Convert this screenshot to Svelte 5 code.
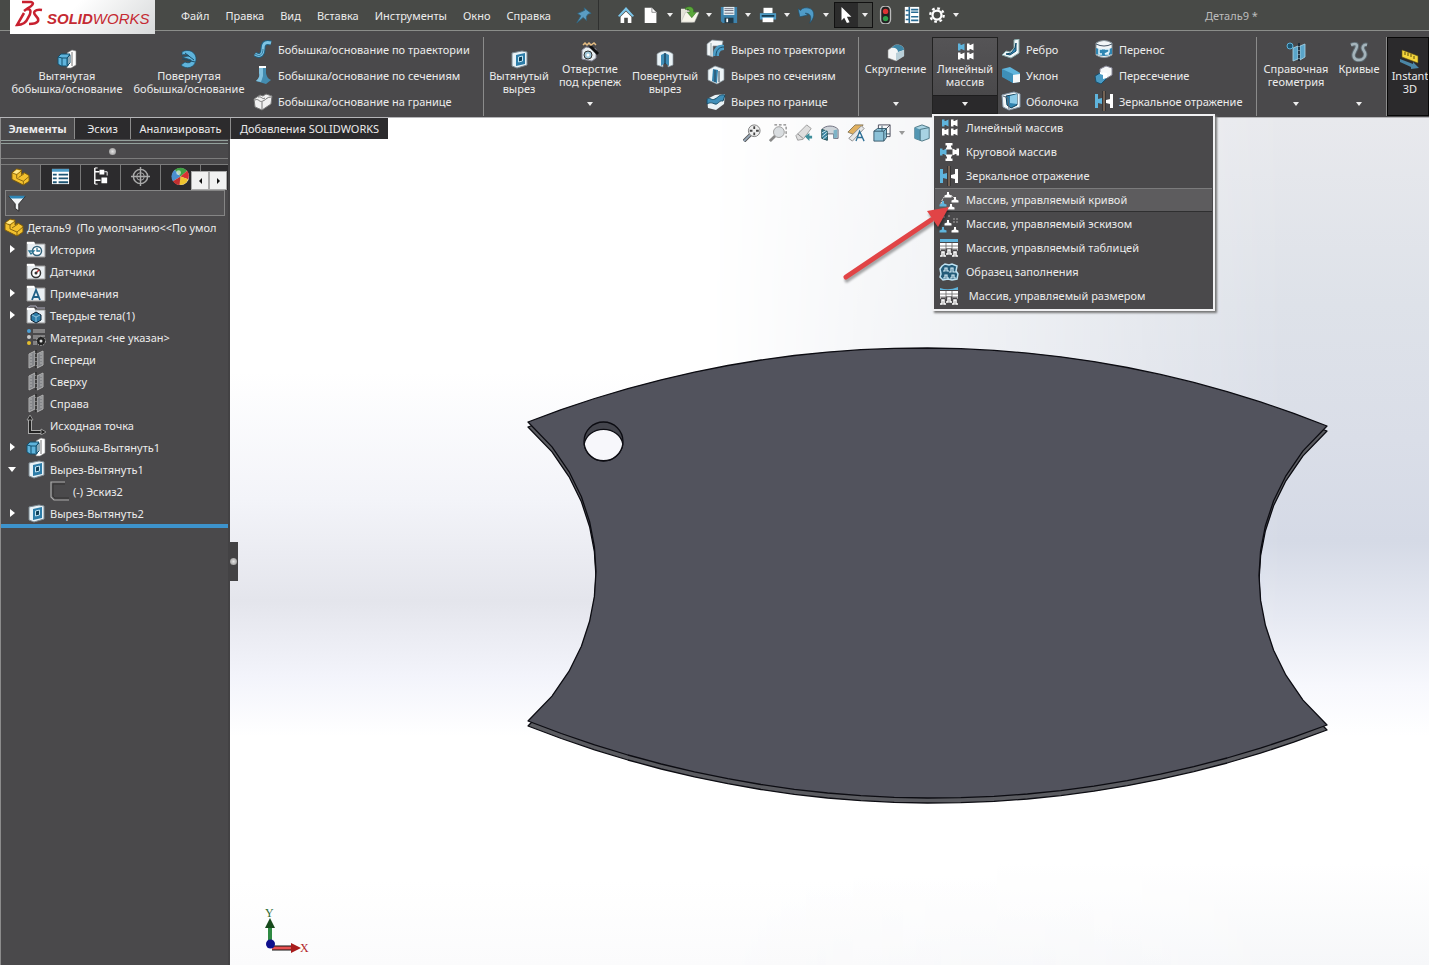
<script>
  const B = '#5fb4dc';
  const L = '#bfe3f3';
  const T = (x, y, c, r = 0) =>
    `<path transform="translate(${x} ${y}) rotate(${r})" d="M-3-3.500h2.500v1.500h1l3-1.500v7l-3-1.500h-1v1.500h-2.500z" fill="${c}"/>`;
  const folder = `<path d="M1 3h7l1 2h10v13H1z" fill="#e9eef2" stroke="#999"/><path d="M1 3h7l1 2H1z" fill="#fff"/>`;
  const cut = `<path d="M3 4l10-2 5 1v13l-10 3-5-2z" fill="#e8f2f7" stroke="#7d8a92"/><path d="M7 6l9-2v11l-9 2z" fill="#2c7ca8"/><path d="M9.500 8l4-1v5l-4 1z" fill="#0f3f58" stroke="${L}"/>`;
  const boss = `<path d="M10 4l5-3 4 1v14l-5 3h-4z" fill="#fff" stroke="#888" stroke-width=".6"/><path d="M15 3v14" stroke="#777"/><path d="M1 8l3-3h9l-2 3v9H4l-3-2z" fill="${B}" stroke="#12506e"/><path d="M1 8l4 1h5l3-3v8l-3 3M5 9v8M10 9v7" fill="none" stroke="#12506e"/>`;
  const tableIcon = (top) =>
    `<path d="${top}v3H1z" fill="${B}"/><path d="M1 5h18v8H1z" fill="#fff"/><path d="M7 5v8M13 5v8M1 8h18M1 11h18" stroke="#666" stroke-width=".8"/><path d="M2 19v-7h4v7M7 17v-6h6v6M14 19v-7h4v7" fill="#4a494b" stroke="#4a494b"/><path d="M1 18h2v-4h2v4h2M7 16h2v-4h2v4h2M13 18h2v-4h2v4h2" fill="none" stroke="#fff" stroke-width="1.500"/>`;
  const plane = `<path d="M3 5l6-3v14l-6 3zM11 5l6-3v14l-6 3z" fill="#84868a" stroke="#b2b2b2"/><path d="M10 1v18" stroke="#2b2b2b" stroke-width="1.500" stroke-dasharray="3 1"/><path d="M5 5v12M15 4v12" stroke="#b2b2b2" stroke-dasharray="2 1"/>`;
  const part = `<path d="M1 6l5-4 5 1v5l3-2 5 3v6l-6 4-12-6z" fill="#f3c12e" stroke="#7d5c0c"/><path d="M1 6l5 2v4l7 3 6-5M6 8l5-4M13 15v4M8 11l6-4" fill="none" stroke="#7d5c0c" stroke-width=".9"/><path d="M2 6l4-3 4 1-4 3z" fill="#ffe88c"/>`;
  const person = (x, y, c) => `<path transform="translate(${x} ${y})" d="M-1-3h2v2.500l2.500 1v2h-7v-2l2.500-1z" fill="${c}"/>`;

  const icons = {
    boss,
    cut,
    part,
    plane,
    revolve: `<path d="M3 3c6-4 15 0 14 8-1 8-10 10-15 5l4-3c4 2 7 0 6-2L3 8l7-1c-1-1-4-2-7-1z" fill="${B}" stroke="#184f6c" stroke-width=".7"/><path d="M3 10l13 3M6 4l9 7" stroke="#1b4d67"/>`,
    sweep: `<path d="M2 15c6 4 8-1 8-5s1-8 8-6" fill="none" stroke="#1f6386" stroke-width="5"/><path d="M2 15c6 4 8-1 8-5s1-8 8-6" fill="none" stroke="#7cc3e4" stroke-width="3"/><path d="M2 15c6 4 8-1 8-5" fill="none" stroke="#1f6386" stroke-width=".8"/>`,
    loft: `<path d="M6 2h7v6c1 5 3 6 5 7l-5 4-10-3c3-3 4-5 3-8z" fill="#438cb0"/><path d="M6 2h4v9l-2 6-5-1c3-3 4-5 3-8z" fill="#82c1de"/><path d="M6 1h7v2H6z" fill="#fff"/>`,
    boundary: `<path d="M1 8l6-4 3 1 3-2 6 2-1 8-9 6-7-3z" fill="#f1f1f1" stroke="#777"/><path d="M2 9c4-2 4 3 8 1s4-4 8-4M9 11v7M5 6c4-1 4 3 7 1" fill="none" stroke="#777"/>`,
    hole: `<path d="M2 8l4-3 10 2v9l-4 3-10-2z" fill="#e7edf0" stroke="#889"/><circle cx="8" cy="13" r="4" fill="#9fc6d9" stroke="#333"/><circle cx="8" cy="13" r="1.500" fill="#fff"/><path d="M10 4l8 8" stroke="#111" stroke-width="3"/><path d="M3 3l2-2 2 2 2-2 2 2 3-2 2 2" fill="none" stroke="#e6bd83" stroke-width="1.500"/>`,
    revcut: `<path d="M2 5c5-4 11-4 16 0v11l-5 2V9H8v9l-6-2z" fill="#e9f2f6" stroke="#8a969d" stroke-width=".7"/><path d="M6 6l4-2 4 2v11l-4-3-4 3z" fill="#3f8db6"/><path d="M10 4v11" stroke="#123"/>`,
    sweepcut: `<path d="M1 5l5-4 11 1-1 5H7v11l-6-2z" fill="#f2f6f8" stroke="#8a969d" stroke-width=".7"/><path d="M5 4v13" stroke="#9aa"/><path d="M7 17C7 9 11 5 18 6v5c-4 0-5 3-5 6z" fill="#4c9dc6"/><path d="M10 17c0-6 3-9 8-9" fill="none" stroke="#164b66"/>`,
    loftcut: `<path d="M2 5l7-4 9 3v11l-7 4-9-4z" fill="#edf4f7" stroke="#8a969d" stroke-width=".7"/><path d="M7 4l5 1-1 13-5-2z" fill="#3181ad"/><path d="M9 5v12M13 6v11" stroke="#345"/>`,
    boundcut: `<path d="M1 8l8-4 10-1-1 10-8 6-8-2z" fill="#e9f2f6"/><path d="M1 8c4-2 4 2 8 0s4-5 10-4l-2 6c-4-1-5 4-8 3s-4-2-8 0z" fill="#3f8fb9" stroke="#164b66"/>`,
    fillet: `<path d="M2 8l7-5c6-1 9 2 9 5v6l-8 5-8-3z" fill="#f2f5f6" stroke="#888" stroke-width=".6"/><path d="M5 6l4-3c6-1 9 2 9 5l-6 2c0-3-3-5-7-4z" fill="#3f86a6"/><path d="M18 8v6l-8 5v-8z" fill="#b9cfd8"/>`,
    linear: T(6, 5, B) + T(15, 5, '#fff') + T(6, 14, '#fff') + T(15, 14, '#fff'),
    circular: T(4, 10, B) + T(10, 4, '#fff', 90) + T(17, 10, '#fff', 180) + T(10, 16, '#fff', 270),
    mirror: `<path d="M1 3h3v5l4-1v6l-4-1v5H1z" fill="${B}"/><path d="M19 3h-3v5l-4 1v3l4 1v4h3z" fill="#fff"/><path d="M10 0v20" stroke="#222" stroke-width="3"/><path d="M10 0v20" stroke="#c9a588"/>`,
    curve: `<path d="M2 14C4 3 13 2 18 12" fill="none" stroke="#ddd" stroke-dasharray="2 1"/>` + person(4, 14, B) + person(9, 5, '#fff') + person(16, 10, '#fff') + person(12, 17, '#fff'),
    sketchp: `<path d="M4 3h2M9 2h2M14 5h2M17 5h2M14 8h2M17 8h2" stroke="#aaa"/>` + person(4, 16, B) + person(9, 9, '#fff') + person(16, 16, '#fff'),
    table: tableIcon('M1 1h18'),
    fill: `<path d="M3 4l3-2 4 1 3-1 5 2-1 5 2 3-1 5-5 1-4-1-5 1-3-3 1-3-1-5z" fill="#235b78" stroke="${L}" stroke-width="1.500"/><path d="M4 9h2V6h2v3h2M10 10h2V6h2v4h3M4 16h2v-3h2v3h2M11 16h2v-3h2v3h2" fill="none" stroke="#d6edf7" stroke-width="1.200"/>`,
    dim: tableIcon('M1 2q9 3 18-1'),
    rib: `<path d="M13 1l5-1v14l-8 5-9-3 4-4 4 1 4-4z" fill="#f2f7f9" stroke="#8aa"/><path d="M15 4v8l-6 4-4-1 5-1 4-5z" fill="#338abb" stroke="#0f4864"/>`,
    draft: `<path d="M1 4l8-2 10 6v9l-7 1-11-7z" fill="${B}"/><path d="M1 4l11 5v9L1 12z" fill="#3e8fb8"/><path d="M12 10l7-1v8l-7 1z" fill="#f6f8f9"/>`,
    shell: `<path d="M1 4l12-3 6 2v13l-11 3-6-3z" fill="#f2f7f9" stroke="#89a"/><path d="M5 5l11-2v11l-6 3-4-3z" fill="#2f82ae" stroke="#123f58"/><path d="M9 5l7-2v10l-7-1z" fill="#8ccbe8"/><path d="M2 5l5 2 1 11" fill="none" stroke="#567"/>`,
    wrap: `<path d="M2 4q8-5 16 0v12q-8 5-16 0z" fill="#f1f6f8" stroke="#8a969d"/><path d="M2 5q8 4 16 0" fill="none" stroke="#456"/><path d="M2 9q8 3 16 0v6q-8 4-16 0z" fill="#2e86b3"/><path d="M8 10H5v5h3M11 10h4v3l-4 2h4" fill="none" stroke="#dff3fc" stroke-width="1.500"/>`,
    intersect: `<path d="M6 4l6-3 6 2v7l-5 3-7-2z" fill="#f5f7f8" stroke="#889"/><path d="M1 11l5-3 6 1v5l-5 5-5-2z" fill="#4a9bc4" stroke="#184f6c"/><path d="M6 7l7 1v5l-4 1V10l-3-1z" fill="#fff"/>`,
    refgeo: `<path d="M7 6l5-2v13l-5 2zM14 4l5-2v13l-5 3z" fill="#5aa5ca" stroke="#a8d5ea" stroke-width=".8"/><path d="M13 1v18" stroke="#123" stroke-width="1.500" stroke-dasharray="3 1"/><circle cx="4" cy="4" r="3" fill="#1d5673" stroke="${B}"/>`,
    curves: `<path d="M2 3c7-3 7 1 4 6s-1 9 4 9 8-5 5-9 0-7 3-6" fill="none" stroke="#5d6a71" stroke-width="4.500"/><path d="M2 3c7-3 7 1 4 6s-1 9 4 9 8-5 5-9 0-7 3-6" fill="none" stroke="#a5b4bb" stroke-width="2.500"/>`,
    instant: `<path d="M2 1l16 6v7L2 8z" fill="#f4d63d" stroke="#6a5a10" stroke-width=".6"/><path d="M5 3v3M8 4v3M11 5v3M14 7v3" stroke="#5a4a08"/><path d="M0 10l13 5v-2l6 6-8 1v-2L0 13z" fill="#4b86a6"/>`,
    home: `<path d="M1 11L10 1l9 10-2 1-7-7-7 7z" fill="#7cc6ea"/><path d="M4 12l6-6 6 6v7h-4v-6H8v6H4z" fill="#fff"/>`,
    newdoc: `<path d="M3 2h8l5 5v12H3z" fill="#fff"/><path d="M11 2v5h5" fill="none" stroke="#888"/>`,
    open: `<path d="M0 3h6l1 2h6v13H0z" fill="#e4e2d8"/><path d="M5 7h15l-5 11H0z" fill="#f7f5ea" stroke="#aaa" stroke-width=".5"/><path d="M5 2c6-3 10 0 9 5h3l-5 6-5-6h3c0-3-2-4-5-3z" fill="#5aa63a" stroke="#2d6a1a" stroke-width=".6"/>`,
    save: `<path d="M1 1h18v18H3l-2-2z" fill="#3d83ad"/><path d="M4 1h12v9H4z" fill="#e4edf2"/><path d="M5 3h10M5 5h10M5 8h10" stroke="#667"/><path d="M5 13h10v6H5z" fill="#223a48"/><path d="M7 14h2v4H7z" fill="#fff"/>`,
    print: `<path d="M5 2h10v6H5z" fill="#fff"/><path d="M1 8h18v7H1z" fill="#4e9cc6"/><path d="M3 11h14" stroke="#153d53" stroke-width="2"/><path d="M4 13h12v5H4z" fill="#fff"/>`,
    undo: `<path d="M0 3l2 9 9-2-3-2c5 0 8 3 5 11 7-7 6-17-4-17-3 0-5 1-6 3z" fill="#4f9bc7" stroke="#1d4e6b" stroke-width=".7"/>`,
    pointer: `<path d="M5 1v15l3-3 3 6 3-1-3-6h5z" fill="#fff"/>`,
    light: `<rect x="4" y="0" width="11" height="20" rx="5" fill="#222" stroke="#bbb" stroke-width="1.500"/><circle cx="9.500" cy="6" r="3" fill="#d33"/><circle cx="9.500" cy="14" r="3" fill="#2fa04a"/>`,
    list: `<path d="M2 1h16v18H2z" fill="#fff"/><path d="M7 1v18M3 5h3M3 10h3M3 15h3M9 4h8M9 7h8M9 12h8M9 16h8" stroke="#276a92" stroke-width="1.800"/>`,
    gear: `<circle cx="10" cy="10" r="5" fill="none" stroke="#fff" stroke-width="2.500"/><circle cx="10" cy="10" r="7.500" fill="none" stroke="#fff" stroke-width="2.500" stroke-dasharray="3 2.890"/>`,
    pin: `<path d="M10 1l9 7-4 1-2 3v5l-4-4-8 7 5-9-4-3 5-2 4-2z" fill="#5a9dc4" stroke="#2f647f"/>`,
    fit: `<path d="M9 11l-8 8" stroke="#555" stroke-width="4"/><path d="M9 11l-8 8" stroke="#9ab" stroke-width="2"/><circle cx="12.500" cy="7.500" r="6.500" fill="#eee" stroke="#777"/><path d="M12.500 2.500v3M12.500 9.500v3M7.500 7.500h3M14.500 7.500h3" stroke="#444" stroke-width="2"/>`,
    area: `<path d="M6 1h13v14" fill="none" stroke="#555" stroke-dasharray="3 2"/><path d="M7 13l-6 6" stroke="#888" stroke-width="3"/><circle cx="11" cy="9" r="6" fill="#d9dde0" stroke="#999"/>`,
    prev: `<path d="M1 13L13 1l5 4-9 12-6 1z" fill="#dedede" stroke="#999"/><path d="M3 11l6 5" stroke="#888"/><path d="M11 14l5-4v3h3v3h-3v3z" fill="#3f8f9b"/>`,
    section: `<path d="M1 6c4-5 14-5 18 0v10h-5v-5H7v7l-6-2z" fill="#cfd5da" stroke="#667"/><path d="M1 6l6 2v10l-6-2z" fill="#3b86a3" stroke="#255"/><path d="M14 7l4-1v9l-4 1z" fill="#7db3c7"/><path d="M1 10l5-3M1 14l6-5M2 17l5-4" stroke="#d5eef5"/>`,
    annot: `<path d="M1 9L9 1h9L8 12z" fill="#e0b060" stroke="#875"/><path d="M2 16L16 2l3 3L6 19z" fill="#e8e8e8" stroke="#888"/><path d="M10 19l4-11 5 11M12 15h5" fill="none" stroke="#2d6f95" stroke-width="1.500"/>`,
    orient: `<path d="M6 6V1h13v13h-5M14 6l5-5" fill="none" stroke="#445"/><path d="M1 8l4-3h10v10l-3 4H1z" fill="#8cc2d8" stroke="#356"/><path d="M1 8h11v11M12 8l3-3M10 8V2M14 11h5" fill="none" stroke="#356"/>`,
    cube: `<path d="M2 4l8-3 8 3v12l-8 3-8-3z" fill="#a8d3e3" stroke="#46707f"/><path d="M2 4l6 2v12l-6-2z" fill="#5497b3"/><path d="M8 6l10-2M8 6v12" stroke="#46707f"/>`,
    props: `<path d="M1 2h18v16H1z" fill="#fff"/><path d="M1 2h18v3H1z" fill="#4e9cc6"/><path d="M2 8h4M2 12h4M2 16h4M8 8h10M8 12h10M8 16h10" stroke="#1e5574" stroke-width="2"/>`,
    config: `<path d="M4 1v17M4 5h5M4 14h6" stroke="#fff" stroke-width="1.500"/><path d="M9 3h5v5H9zM11 11h6v6h-6z" fill="#fff"/><path d="M14 5h3v4M4 1h3M4 18h3" fill="none" stroke="#fff"/>`,
    target: `<circle cx="10" cy="10" r="7.500" fill="none" stroke="#aaa" stroke-width="1.500"/><circle cx="10" cy="10" r="4" fill="none" stroke="#aaa"/><path d="M10 0v20M0 10h20" stroke="#aaa" stroke-width="1.500"/>`,
    ball: `<circle cx="10" cy="10" r="9" fill="#eee"/><path d="M10 10L2 15A9 9 0 0 1 4 3z" fill="#4a8fd0"/><path d="M10 10L4 3A9 9 0 0 1 17 4z" fill="#3fa043"/><path d="M10 10l7-6a9 9 0 0 1 1 9z" fill="#d83232"/><path d="M10 10l8 3a9 9 0 0 1-9 6z" fill="#f0c42e"/><path d="M10 10l-1 9a9 9 0 0 1-7-4z" fill="#c22f2f"/><circle cx="8" cy="6" r="2.500" fill="#fff" opacity=".6"/>`,
    funnel: `<path d="M1 3h18l-7 8v8l-4-3v-5z" fill="#f2f5f7" stroke="#222"/><path d="M1 2h18l-2 3H3z" fill="#2f85b5"/>`,
    history: folder + `<circle cx="11" cy="12" r="4.500" fill="#fff" stroke="#33637a" stroke-width="1.500"/><path d="M11 9v3h3M3 12h5l-3 3z" fill="none" stroke="#2c7694" stroke-width="1.300"/>`,
    sensor: folder + `<circle cx="10" cy="12" r="4.500" fill="#fff" stroke="#333" stroke-width="1.500"/><path d="M10 12l3-3" stroke="#b33" stroke-width="1.500"/><circle cx="10" cy="12" r="1.500" fill="#333"/>`,
    notes: folder + `<path d="M6 17l4-10 4 10M7 14h6" fill="none" stroke="#1f5f86" stroke-width="1.800"/>`,
    solids: `<path d="M1 3l3-2h6l1 2h8" fill="none" stroke="#aab"/>` + folder + `<path d="M5 10l5-3 5 3v5l-5 3-5-3z" fill="#2c7ca8" stroke="#123"/><path d="M6 10l4 2 4-2M10 12v5" stroke="#bfe3f3" fill="none" stroke-width=".7"/>`,
    material: `<circle cx="3" cy="4" r="2" fill="#4da0d6"/><circle cx="3" cy="10" r="2" fill="#ccc"/><circle cx="3" cy="16" r="2" fill="#e3bd2e"/><path d="M7 3h12M7 5h12M7 9h12M7 11h6M7 15h4M7 17h4" stroke="#bbb"/><circle cx="15" cy="14" r="4.500" fill="#222" stroke="#aaa" stroke-dasharray="2 1"/><circle cx="15" cy="14" r="1.500" fill="#ddd"/>`,
    origin: `<path d="M4 3v14h12" fill="none" stroke="#aaa" stroke-width="4"/><path d="M4 3v14h12" fill="none" stroke="#222" stroke-width="2"/><path d="M4 0l3 5H1zM20 17l-5 3v-6z" fill="#222" stroke="#aaa" stroke-width=".8"/>`,
    sketch: `<path d="M16 1H2v15l3 3h15" fill="none" stroke="#aaa" stroke-width="1.200"/><path d="M16 3H4v12l2 2h14" fill="none" stroke="#333"/>`
  };

  const menus = ['Файл', 'Правка', 'Вид', 'Вставка', 'Инструменты', 'Окно', 'Справка'];
  const quick = [
    { icon: 'home', label: 'Домой' },
    { icon: 'newdoc', label: 'Создать', arrow: true },
    { icon: 'open', label: 'Открыть', arrow: true },
    { icon: 'save', label: 'Сохранить', arrow: true },
    { icon: 'print', label: 'Печать', arrow: true },
    { icon: 'undo', label: 'Отменить', arrow: true },
    { icon: 'pointer', label: 'Выбрать', arrow: true, active: true },
    { icon: 'light', label: 'Перестроить' },
    { icon: 'list', label: 'Свойства' },
    { icon: 'gear', label: 'Параметры', arrow: true }
  ];
  const tabs = ['Элементы', 'Эскиз', 'Анализировать', 'Добавления SOLIDWORKS'];
  const patterns = [
    ['linear', 'Линейный массив'],
    ['circular', 'Круговой массив'],
    ['mirror', 'Зеркальное отражение'],
    ['curve', 'Массив, управляемый кривой'],
    ['sketchp', 'Массив, управляемый эскизом'],
    ['table', 'Массив, управляемый таблицей'],
    ['fill', 'Образец заполнения'],
    ['dim', '\u00a0Массив, управляемый размером']
  ];
  const view = ['fit', 'area', 'prev', 'section', 'annot', 'orient'];
  const panelTabs = ['part', 'props', 'config', 'target', 'ball'];
  const tree = [
    ['history', 'История', 'closed'],
    ['sensor', 'Датчики', ''],
    ['notes', 'Примечания', 'closed'],
    ['solids', 'Твердые тела(1)', 'closed'],
    ['material', 'Материал <не указан>', ''],
    ['plane', 'Спереди', ''],
    ['plane', 'Сверху', ''],
    ['plane', 'Справа', ''],
    ['origin', 'Исходная точка', ''],
    ['boss', 'Бобышка-Вытянуть1', 'closed'],
    ['cut', 'Вырез-Вытянуть1', 'open'],
    ['sketch', '(-) Эскиз2', 'child'],
    ['cut', 'Вырез-Вытянуть2', 'closed']
  ];

  // Points of a faceted arc from a to b that bulges by (bx, by) at its middle.
  function facet(a, b, bx, by, n) {
    const pts = [];
    const half = Math.hypot(b[0] - a[0], b[1] - a[1]) / 2;
    const sag = Math.hypot(bx, by);
    const r = (half * half + sag * sag) / (2 * sag);
    for (let i = 0; i < n; i++) {
      const t = i / n;
      const u = (t - 0.5) * 2 * half;
      const k = (Math.sqrt(r * r - u * u) - (r - sag)) / sag;
      pts.push([a[0] + (b[0] - a[0]) * t + bx * k, a[1] + (b[1] - a[1]) * t + by * k]);
    }
    return pts;
  }
  const tl = [528, 422], tr = [1327, 426], br = [1327, 725], bl = [528, 721];
  const outline = [
    ...facet(tl, tr, 0, -76, 24),
    ...facet(tr, br, -68, 0, 12),
    ...facet(br, bl, 0, 75, 24),
    ...facet(bl, tl, 68, 0, 12)
  ]
    .map((p) => p.map((v) => v.toFixed(1)).join(','))
    .join(' ');
</script>

{#snippet icon(name)}
  <svg class="icon" viewBox="0 0 20 20" aria-hidden="true">{@html icons[name]}</svg>
{/snippet}

{#snippet big(name, a, b, drop)}
  <button class="big" class:drop>
    {@render icon(name)}
    <span>{a}</span>
    <span>{b}</span>
    {#if drop}<i class="caret"></i>{/if}
  </button>
{/snippet}

{#snippet small(items)}
  <div class="stack">
    {#each items as [name, label]}
      <button class="small">{@render icon(name)}<span>{label}</span></button>
    {/each}
  </div>
{/snippet}

<div class="app">
  <header class="title-bar">
    <div class="logo">
      <svg viewBox="0 0 28 30" aria-hidden="true">
        <path d="M6 2h9c4 1 1 4-3 6l-4 3M11 9c5 0 4 4 1 9-2 5-5 7-11 7l7-12M26 10c-7-1-10 2-6 6s3 8-7 8" fill="none" stroke="#c8202f" stroke-width="2.500" />
      </svg>
      <span><b>SOLID</b>WORKS</span>
    </div>
    <nav>
      {#each menus as m}<button>{m}</button>{/each}
    </nav>
    <button class="pin" aria-label="Закрепить">{@render icon('pin')}</button>
    <div class="quick">
      {#each quick as q}
        <div class="split" class:active={q.active} class:single={!q.arrow}>
          <button class="q" aria-label={q.label}>{@render icon(q.icon)}</button>
          {#if q.arrow}<button class="qa" aria-label="{q.label}: список"><i class="caret"></i></button>{/if}
        </div>
      {/each}
    </div>
    <div class="doc">Деталь9 *</div>
  </header>

  <div class="ribbon">
    <section class="group g1">
      {@render big('boss', 'Вытянутая', 'бобышка/основание', false)}
      {@render big('revolve', 'Повернутая', 'бобышка/основание', false)}
      {@render small([['sweep', 'Бобышка/основание по траектории'], ['loft', 'Бобышка/основание по сечениям'], ['boundary', 'Бобышка/основание на границе']])}
    </section>
    <section class="group g2">
      {@render big('cut', 'Вытянутый', 'вырез', false)}
      {@render big('hole', 'Отверстие', 'под крепеж', true)}
      {@render big('revcut', 'Повернутый', 'вырез', false)}
      {@render small([['sweepcut', 'Вырез по траектории'], ['loftcut', 'Вырез по сечениям'], ['boundcut', 'Вырез по границе']])}
    </section>
    <section class="group g3">
      {@render big('fillet', 'Скругление', '\u00a0', true)}
      <div class="pattern">
        {@render big('linear', 'Линейный', 'массив', true)}
        <div class="menu">
          {#each patterns as [name, label], i}
            <button class:hover={i === 3}>{@render icon(name)}<span>{label}</span></button>
          {/each}
          <svg class="pointer" viewBox="0 0 120 100" aria-hidden="true">
            <path d="M10 83L95 26" stroke="#e14446" stroke-width="5" stroke-linecap="round" />
            <path d="M113 13l-22 4 11 16z" fill="#e14446" />
          </svg>
        </div>
      </div>
      {@render small([['rib', 'Ребро'], ['draft', 'Уклон'], ['shell', 'Оболочка']])}
      {@render small([['wrap', 'Перенос'], ['intersect', 'Пересечение'], ['mirror', 'Зеркальное отражение']])}
    </section>
    <section class="group g4">
      {@render big('refgeo', 'Справочная', 'геометрия', true)}
      {@render big('curves', 'Кривые', '\u00a0', true)}
    </section>
    <section class="instant">
      {@render big('instant', 'Instant', '3D', false)}
    </section>
  </div>

  <main>
    <aside>
      <div class="tabs">
        {#each tabs as t, i}<button class:current={i === 0}>{t}</button>{/each}
      </div>
      <div class="grip"><i class="dot"></i></div>
      <div class="panel-tabs">
        {#each panelTabs as p, i}
          <button class:current={i === 0} aria-label="Вкладка {i + 1}">{@render icon(p)}</button>
        {/each}
        <div class="scroller">
          <button aria-label="Назад"><i class="tri left"></i></button>
          <button aria-label="Вперед"><i class="tri right"></i></button>
        </div>
      </div>
      <label class="filter">{@render icon('funnel')}<input type="text" aria-label="Фильтр" /></label>
      <div class="root">{@render icon('part')}<span>Деталь9&nbsp; (По умолчанию&lt;&lt;По умол</span></div>
      <ul>
        {#each tree as [name, label, state]}
          <li class={state}>
            <i class="toggle"></i>{@render icon(name)}<span>{label}</span>
          </li>
        {/each}
      </ul>
      <div class="rollback"></div>
      <button class="handle" aria-label="Свернуть панель"><i class="dot"></i></button>
    </aside>

    <div class="viewport">
      <div class="shade"></div>
      <svg class="scene" viewBox="230 118 1199 847" preserveAspectRatio="xMinYMin meet" aria-hidden="true">
        <g stroke="#0c0c12" stroke-width="1.3" stroke-linejoin="round">
          <polygon points={outline} transform="translate(0 5)" fill="#5b5c61" />
          <polygon points={outline} fill="#52535d" />
          <circle cx="603.5" cy="441.500" r="19.500" fill="#44454d" />
          <path d="M584.200 444A19.500 17 0 0 1 622.800 444A19.500 19.500 0 0 1 584.200 444z" fill="#f7f7fb" />
        </g>
        <path d="M270 942V926" stroke="#2f8a43" stroke-width="4" />
        <path d="M270 918l5 10h-10z" fill="#174a1c" />
        <path d="M272 948h19" stroke="#111" stroke-width="5" />
        <path d="M272 948h19" stroke="#e85050" stroke-width="3" />
        <path d="M301 948l-10-5v10z" fill="#a81c1c" />
        <circle cx="270.5" cy="944" r="4.500" fill="#10108c" />
        <text x="265" y="917" fill="#2c6b33">Y</text>
        <text x="300" y="952" fill="#b3262b">X</text>
      </svg>
      <div class="heads-up">
        {#each view as v}<button aria-label="Вид {v}">{@render icon(v)}</button>{/each}
        <button class="va" aria-label="Ориентация"><i class="caret"></i></button>
        <button aria-label="Стиль отображения">{@render icon('cube')}</button>
      </div>
    </div>
  </main>
</div>

<style>
  :global(body) {
    margin: 0;
    background: #4a494b;
  }
  .app {
    display: flex;
    flex-direction: column;
    min-height: 100vh;
    overflow: hidden;
    font: 11px/13px 'Noto Sans', sans-serif;
    color: #ececec;
  }
  button {
    font: inherit;
    color: inherit;
    background: none;
    border: 0;
    padding: 0;
    margin: 0;
    white-space: nowrap;
  }
  .icon {
    display: block;
    width: 18px;
    height: 18px;
    flex: none;
  }
  .caret {
    display: block;
    border: 3px solid transparent;
    border-top: 4px solid #eee;
    border-bottom: 0;
    width: 0;
  }
  .title-bar {
    display: flex;
    align-items: center;
    height: 30px;
    background: #484a47;
    border-bottom: 1px solid #8b8d8a;
  }
  .logo {
    display: flex;
    align-items: center;
    align-self: flex-start;
    width: 140px;
    height: 34px;
    margin-left: 10px;
    padding-left: 5px;
    gap: 2px;
    background: linear-gradient(135deg, #fff 40%, #d8dadb);
    z-index: 2;
    color: #c52a32;
    font: italic 15px/34px 'Liberation Sans', sans-serif;
    white-space: nowrap;
  }
  .logo svg {
    width: 30px;
    height: 30px;
    flex: none;
    align-self: flex-start;
  }
  .logo span {
    padding-top: 4px;
  }
  nav {
    display: flex;
    gap: 16px;
    margin-left: 26px;
  }
  .pin {
    margin: 0 6px 0 25px;
    padding-right: 6px;
    border-right: 1px solid #2f302f;
    height: 30px;
  }
  .pin .icon {
    width: 16px;
  }
  .quick {
    display: flex;
    align-items: center;
    margin-left: 8px;
  }
  .split {
    display: flex;
    align-items: center;
    height: 26px;
  }
  .q {
    width: 24px;
    display: grid;
    place-items: center;
  }
  .single .q {
    width: 26px;
  }
  .qa {
    width: 15px;
    height: 24px;
    display: grid;
    place-items: center;
  }
  .split.active {
    box-sizing: border-box;
    border: 1px solid #111;
    width: 39px;
  }
  .split.active .q {
    background: #2c2c2c;
    height: 24px;
  }
  .doc {
    flex: 1;
    padding-left: 70px;
    text-align: center;
    color: #bdbdbd;
  }
  .ribbon {
    display: flex;
    height: 79px;
    padding: 6px 0 1px;
    background: #4a494b;
    border-bottom: 1px solid #b5b5b8;
  }
  .group {
    display: grid;
    flex: none;
    border-right: 1px solid #8b8b8b;
  }
  .g1 {
    grid-template-columns: 122px 122px 233px;
    padding-left: 6px;
  }
  .g2 {
    grid-template-columns: 70px 72px 78px 154px;
  }
  .g3 {
    grid-template-columns: 73px 66px 93px 165px;
  }
  .g4 {
    grid-template-columns: 78px 48px;
    padding-right: 3px;
  }
  .big {
    display: flex;
    flex-direction: column;
    align-items: center;
    width: 100%;
    height: 79px;
    padding-top: 12px;
  }
  .big.drop {
    padding-top: 5px;
  }
  .big .icon {
    width: 20px;
    height: 20px;
  }
  .big .caret {
    margin-top: 14px;
  }
  .stack {
    display: grid;
    grid-template-rows: repeat(3, 26px);
    padding-left: 2px;
  }
  .small {
    display: flex;
    align-items: center;
    gap: 5px;
    padding-bottom: 2px;
    text-align: left;
  }
  .small .icon {
    width: 20px;
    height: 20px;
  }
  .g1 .stack,
  .g3 .stack {
    padding-left: 3px;
  }
  .pattern {
    position: relative;
  }
  .pattern > :global(.big) {
    box-sizing: border-box;
    height: 77px;
    padding-top: 4px;
    border: 1px solid #222;
    background: linear-gradient(#555456 0, #4a494b 57px, #111 57px, #2a292b 58px);
  }
  .menu {
    position: absolute;
    top: 77px;
    left: 0;
    z-index: 5;
    display: flex;
    flex-direction: column;
    width: 277px;
    padding: 0 1px 1px;
    background: #4a494b;
    border: 2px solid #f1f1f3;
    box-shadow: 2px 2px 2px #777;
  }
  .menu button {
    box-sizing: border-box;
    display: flex;
    align-items: center;
    height: 24px;
    padding: 0 0 1px 4px;
    gap: 7px;
    text-align: left;
  }
  .menu button .icon {
    width: 20px;
    height: 20px;
  }
  .menu button.hover {
    background: #5d5c5e;
    border-top: 1px solid #7b7b7c;
    border-bottom: 1px solid #2f2f30;
  }
  .pointer {
    position: absolute;
    left: -98px;
    top: 78px;
    width: 120px;
    height: 100px;
    filter: drop-shadow(1px 3px 1px #0005);
  }
  .instant {
    flex: 1;
    min-width: 0;
    overflow: hidden;
    background: #2b2a2c;
    border: 1px solid #080808;
  }
  .instant :global(.big) {
    width: 44px;
    padding-top: 11px;
  }
  main {
    display: flex;
    flex: 1;
  }
  aside {
    position: relative;
    z-index: 2;
    flex: none;
    box-sizing: border-box;
    width: 230px;
    background: #4a494b;
    border-left: 1px solid #8c8c8c;
    border-right: 2px solid #434244;
  }
  .tabs {
    display: grid;
    grid-template-columns: 73px 56px 100px 158px;
    width: max-content;
    height: 21px;
  }
  .tabs button {
    background: #2c2b2d;
    border-left: 1px solid #8b8b8b;
  }
  .tabs button.current {
    background: #4a494b;
    border-left: 0;
    font-weight: bold;
  }
  .dot {
    display: block;
    width: 7px;
    height: 7px;
    border-radius: 50%;
    background: radial-gradient(#e4e4e4, #8a8a8a);
  }
  .grip {
    display: grid;
    place-items: center;
    height: 14px;
    margin: 1px 0 5px;
    border-top: 4px double #93a09b;
    border-bottom: 1px solid #7c7c7c;
    padding-right: 4px;
  }
  .panel-tabs {
    position: relative;
    display: grid;
    grid-template-columns: repeat(5, 40px);
    height: 25px;
    background: #2c2b2d;
    border-top: 1px solid #7c7c7c;
    overflow: hidden;
  }
  .panel-tabs > button {
    display: grid;
    place-items: center;
    padding-bottom: 2px;
    border-right: 1px solid #777;
  }
  .panel-tabs > button.current {
    background: #4a494b;
  }
  .panel-tabs > button .icon {
    width: 19px;
    height: 19px;
  }
  .scroller {
    position: absolute;
    right: 1px;
    bottom: 0;
    display: flex;
    background: #f1f1f1;
  }
  .scroller button {
    display: grid;
    place-items: center;
    width: 18px;
    height: 19px;
    border: 1px solid #aaa;
    box-sizing: border-box;
  }
  .tri {
    border: 3px solid transparent;
  }
  .left {
    border-right-color: #111;
    border-left: 0;
  }
  .right {
    border-left-color: #111;
    border-right: 0;
  }
  .filter {
    display: flex;
    align-items: center;
    height: 24px;
    margin: 0 3px 0 4px;
    padding-left: 2px;
    border: 1px solid #858585;
    background: #545355;
  }
  .filter input {
    flex: 1;
    min-width: 0;
    background: none;
    border: 0;
    outline: 0;
    color: inherit;
    font: inherit;
  }
  .root {
    display: flex;
    align-items: center;
    gap: 3px;
    height: 22px;
    padding-left: 3px;
    overflow: hidden;
    white-space: nowrap;
  }
  .root .icon {
    width: 20px;
    height: 20px;
  }
  ul {
    list-style: none;
    margin: 0;
    padding: 0;
  }
  li {
    display: flex;
    align-items: center;
    height: 22px;
    gap: 4px;
    white-space: nowrap;
  }
  .toggle {
    box-sizing: border-box;
    width: 12px;
    margin: 0 0 0 9px;
    height: 8px;
    flex: none;
  }
  .closed .toggle {
    width: 5px;
    margin-right: 7px;
    border: 4px solid transparent;
    border-left: 5px solid #fff;
    border-right: 0;
  }
  .open .toggle {
    width: 8px;
    height: 5px;
    margin-left: 7px;
    margin-right: 6px;
    border: 4px solid transparent;
    border-top: 5px solid #fff;
    border-bottom: 0;
  }
  li .icon {
    width: 20px;
    height: 20px;
  }
  .child .toggle {
    margin-left: 32px;
  }
  .rollback {
    height: 4px;
    background: #3d93cc;
  }
  .handle {
    position: absolute;
    left: 228px;
    top: 424px;
    display: grid;
    place-items: center;
    width: 9px;
    height: 39px;
    background: #434244;
  }
  .viewport {
    position: relative;
    flex: 1;
    min-width: 0;
    background: linear-gradient(#fff 0, #fff 30%, #f3f4f9 45%, #e4e5ec 57%, #f3f4fb 66%, #fff 73%, #fff 90%, #fbfbfc);
  }
  .shade {
    position: absolute;
    inset: 0;
    background: linear-gradient(#e8e9ed 0, #dee2e9 22%, #dadee8 38%, #d5dae6 50%, #e6e9f2 59%, #f7f8fd 67%, #fff 73%, #fff 88%, #f6f7f9);
    mask-image: linear-gradient(90deg, transparent 40%, #000 88%);
  }
  .scene {
    position: absolute;
    left: 0;
    top: 0;
    width: 100%;
  }
  .scene text {
    font: 12px 'Liberation Serif', serif;
  }
  .heads-up {
    position: relative;
    display: flex;
    justify-content: center;
    padding: 5px 0 0 15px;
  }
  .heads-up button {
    display: grid;
    place-items: center;
    width: 26px;
    height: 20px;
  }
  .heads-up .va {
    width: 14px;
  }
  .heads-up .caret {
    border-top-color: #999;
  }
</style>
